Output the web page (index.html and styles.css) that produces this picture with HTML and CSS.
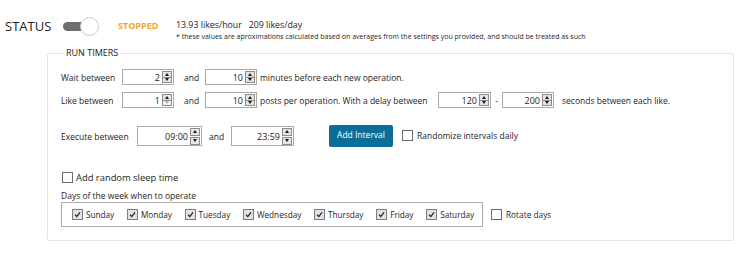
FILE: index.html
```html
<!DOCTYPE html>
<html lang="en">
<head>
<meta charset="UTF-8">
<title>Run Timers</title>
<link rel="stylesheet" href="styles.css">
</head>
<body>
  <header class="status-bar">
    <span class="status-label">STATUS</span>
    <span class="toggle"><span class="toggle-knob"></span></span>
    <span class="status-state">STOPPED</span>
    <div class="stats">
      <div class="stats-main">13.93 likes/hour&nbsp;&nbsp; 209 likes/day</div>
      <div class="stats-note">* these values are aproximations calculated based on averages from the settings you provided, and should be treated as such</div>
    </div>
  </header>

  <fieldset class="timers">
    <legend>RUN TIMERS</legend>

    <div class="row">
      <span class="lbl lbl-num">Wait between</span>
      <span class="spin w52"><span class="val">2</span><span class="arrows"><i class="up"></i><i class="down"></i></span></span>
      <span class="and">and</span>
      <span class="spin w52"><span class="val">10</span><span class="arrows"><i class="up"></i><i class="down"></i></span></span>
      <span class="txt">minutes before each new operation.</span>
    </div>

    <div class="row row-2">
      <span class="lbl lbl-num">Like between</span>
      <span class="spin w52"><span class="val">1</span><span class="arrows"><i class="up"></i><i class="down off"></i></span></span>
      <span class="and">and</span>
      <span class="spin w52"><span class="val">10</span><span class="arrows"><i class="up"></i><i class="down"></i></span></span>
      <span class="txt txt-fixed">posts per operation. With a delay between</span>
      <span class="spin w53"><span class="val">120</span><span class="arrows"><i class="up"></i><i class="down"></i></span></span>
      <span class="dash">-</span>
      <span class="spin w52"><span class="val">200</span><span class="arrows"><i class="up"></i><i class="down"></i></span></span>
      <span class="txt txt-after">seconds between each like.</span>
    </div>

    <div class="row row-3">
      <span class="lbl lbl-time">Execute between</span>
      <span class="spin time w65"><span class="val">09:00</span><span class="arrows"><i class="up"></i><i class="down"></i></span></span>
      <span class="and and-time">and</span>
      <span class="spin time w63"><span class="val">23:59</span><span class="arrows"><i class="up"></i><i class="down"></i></span></span>
      <button class="btn">Add Interval</button>
      <label class="check check-rand"><span class="cb"></span>Randomize intervals daily</label>
    </div>

    <div class="row row-4">
      <label class="check check-sleep"><span class="cb"></span>Add random sleep time</label>
    </div>

    <div class="days-label">Days of the week when to operate</div>

    <div class="days-row">
      <div class="days">
        <label class="check day"><span class="cb on"><svg viewBox="0 0 10 10"><path d="M2.2 5.2 L4.2 7.4 L7.8 2.6"/></svg></span>Sunday</label>
        <label class="check day"><span class="cb on"><svg viewBox="0 0 10 10"><path d="M2.2 5.2 L4.2 7.4 L7.8 2.6"/></svg></span>Monday</label>
        <label class="check day"><span class="cb on"><svg viewBox="0 0 10 10"><path d="M2.2 5.2 L4.2 7.4 L7.8 2.6"/></svg></span>Tuesday</label>
        <label class="check day"><span class="cb on"><svg viewBox="0 0 10 10"><path d="M2.2 5.2 L4.2 7.4 L7.8 2.6"/></svg></span>Wednesday</label>
        <label class="check day"><span class="cb on"><svg viewBox="0 0 10 10"><path d="M2.2 5.2 L4.2 7.4 L7.8 2.6"/></svg></span>Thursday</label>
        <label class="check day"><span class="cb on"><svg viewBox="0 0 10 10"><path d="M2.2 5.2 L4.2 7.4 L7.8 2.6"/></svg></span>Friday</label>
        <label class="check day"><span class="cb on"><svg viewBox="0 0 10 10"><path d="M2.2 5.2 L4.2 7.4 L7.8 2.6"/></svg></span>Saturday</label>
      </div>
      <label class="check check-rotate"><span class="cb"></span>Rotate days</label>
    </div>
  </fieldset>
</body>
</html>
```

FILE: styles.css
```css
* {
    margin: 0;
    padding: 0;
    box-sizing: border-box;
}

body {
    background: #fff;
    color: #1e1e1e;
    font-family: "Open Sans", "Noto Sans", sans-serif;
    font-size: 8.5px;
}

/* top status line */
.status-bar {
    display: flex;
    align-items: flex-start;
    padding: 16px 0 0 5px;
    height: 47px;
}

.status-label {
    width: 58px;
    font-size: 13px;
    line-height: 20px;
    color: #222;
}

.toggle {
    position: relative;
    width: 36px;
    height: 19px;
    margin-top: 1px;
}

.toggle::before {
    content: "";
    position: absolute;
    left: 0;
    top: 5px;
    width: 22px;
    height: 9px;
    border-radius: 5px;
    background: #6e6e6e;
}

.toggle-knob {
    position: absolute;
    left: 17px;
    top: 0;
    width: 19px;
    height: 19px;
    border-radius: 50%;
    background: #fff;
    border: 1px solid #c9c9c9;
}

.status-state {
    margin-left: 19px;
    width: 58px;
    line-height: 20px;
    font-size: 9px;
    font-weight: bold;
    color: #f5a327;
}

.stats-main {
    font-size: 8.8px;
    line-height: 18px;
}

.stats-note {
    font-size: 7px;
    line-height: 8px;
    margin-top: -1px;
}

/* run timers box */
.timers {
    margin-left: 47px;
    width: 687px;
    border: 1px solid #dfe4ea;
    border-radius: 2px;
    padding: 10px 13px 13px;
}

.timers legend {
    margin-left: 3px;
    padding: 0 2px;
    font-size: 9px;
    line-height: 12px;
    color: #222;
}

.row {
    display: flex;
    align-items: center;
    height: 16px;
}

.row-2 { margin-top: 7px; }
.row-3 { margin-top: 17px; height: 22px; }
.row-4 { margin-top: 23px; height: 14px; }

.lbl-num { width: 61px; }
.lbl-time { width: 76px; }

.and {
    width: 31px;
    padding-left: 10px;
}

.and-time {
    width: 29px;
    padding-left: 7px;
}

.txt { margin-left: 3px; }
.txt-fixed { width: 178px; }
.txt-after { margin-left: 8px; }

.dash {
    width: 11px;
    text-align: center;
}

/* numeric spinners */
.spin {
    display: flex;
    align-items: center;
    height: 16px;
    border: 1px solid #a8a8a8;
    background: #fff;
    padding: 1px;
}

.w52 { width: 52px; }
.w53 { width: 53px; }
.w63 { width: 63px; }
.w65 { width: 65px; }

.spin .val {
    flex: 1;
    text-align: right;
    padding-right: 2px;
    font-size: 9px;
}

.arrows {
    display: flex;
    flex-direction: column;
    width: 10px;
    height: 12px;
    border: 1px solid #8c8c8c;
    background: #e4e4e4;
}

.arrows i {
    flex: 1;
    display: flex;
    align-items: center;
    justify-content: center;
}

.arrows i.down {
    border-top: 1px solid #8c8c8c;
}

.arrows i::before {
    content: "";
    border-left: 2.5px solid transparent;
    border-right: 2.5px solid transparent;
    border-bottom: 3px solid #1a1a1a;
}

.arrows i.down::before {
    border-bottom: 0;
    border-top: 3px solid #1a1a1a;
}

.arrows i.off {
    background: #f2f2f2;
}

.arrows i.off::before {
    border-top-color: #b8b8b8;
}

.time {
    height: 20px;
}

.time .arrows {
    height: 17px;
    border: 0;
    background: none;
    gap: 1px;
}

.time .arrows i {
    border: 1px solid #8c8c8c;
    background: #e4e4e4;
}

/* button */
.btn {
    margin-left: 35px;
    width: 64px;
    height: 22px;
    border: 0;
    border-radius: 2px;
    background: #0a6e99;
    color: #fff;
    font-family: inherit;
    font-size: 8.5px;
    padding-bottom: 3px;
}

/* checkboxes */
.check {
    display: flex;
    align-items: center;
}

.cb {
    width: 11px;
    height: 11px;
    border: 1px solid #6b6b6b;
    background: #fff;
    margin-right: 3px;
    flex: none;
}

.cb.on {
    background: #e2e2e2;
    border-color: #7d7d7d;
}

.cb svg {
    display: block;
    width: 9px;
    height: 9px;
}

.cb svg path {
    fill: none;
    stroke: #1a1a1a;
    stroke-width: 1.3;
}

.check-rand {
    margin-left: 9px;
    margin-top: -2px;
}

.check-rand .cb { margin-right: 4px; }

.check-sleep {
    margin-left: 1px;
    font-size: 9.4px;
}

.check-sleep .cb { margin-right: 3px; }

.days-label {
    margin-top: 6px;
    line-height: 11px;
    font-size: 8.5px;
}

.days-row {
    display: flex;
    align-items: center;
    margin-top: 1px;
}

.days {
    display: flex;
    align-items: center;
    gap: 12.7px;
    width: 422px;
    height: 25px;
    border: 1px solid #a9a9a9;
    padding-left: 10px;
    font-size: 8.2px;
}

.check-rotate {
    margin-left: 8px;
    font-size: 8.3px;
}

.check-rotate .cb { margin-right: 4px; }
```
